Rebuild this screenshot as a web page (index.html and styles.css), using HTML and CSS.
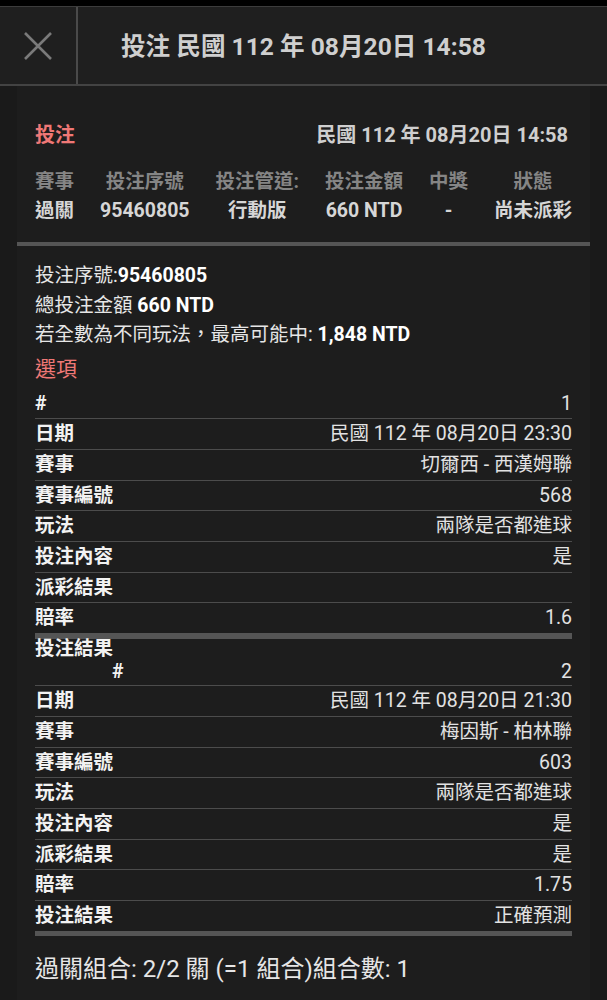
FILE: index.html
```html
<!DOCTYPE html>
<html lang="zh-Hant">
<head>
    <meta charset="UTF-8">
    <meta name="viewport" content="width=device-width, initial-scale=1.0">
    <title>投注</title>
    <link rel="stylesheet" href="styles.css">
</head>
<body>
    <div class="status-bar"></div>

    <!-- 上方標題列 -->
    <header class="top-bar">
        <button class="close-btn" aria-label="關閉">
            <svg width="28" height="28" viewBox="0 0 28 28">
                <path d="M1 1 L27 27 M27 1 L1 27" stroke="#7a7a7a" stroke-width="2.6" fill="none"/>
            </svg>
        </button>
        <div class="top-title">投注 民國 112 年 08月20日 14:58</div>
    </header>

    <div class="card">
        <!-- 投注摘要 -->
        <section class="summary">
            <div class="summary-head">
                <span class="red-title">投注</span>
                <span class="summary-date">民國 112 年 08月20日 14:58</span>
            </div>
            <div class="summary-table">
                <div class="col"><span class="col-label">賽事</span><span class="col-value">過關</span></div>
                <div class="col"><span class="col-label">投注序號</span><span class="col-value">95460805</span></div>
                <div class="col"><span class="col-label">投注管道:</span><span class="col-value">行動版</span></div>
                <div class="col"><span class="col-label">投注金額</span><span class="col-value">660 NTD</span></div>
                <div class="col"><span class="col-label">中獎</span><span class="col-value">-</span></div>
                <div class="col"><span class="col-label">狀態</span><span class="col-value">尚未派彩</span></div>
            </div>
        </section>

        <hr class="thick-line">

        <section class="detail">
            <p class="info">投注序號:<b>95460805</b></p>
            <p class="info">總投注金額 <b>660 NTD</b></p>
            <p class="info">若全數為不同玩法，最高可能中: <b>1,848 NTD</b></p>
            <h3 class="option-title">選項</h3>

            <!-- 第一關 -->
            <div class="row"><span class="label">#</span><span class="value">1</span></div>
            <div class="row"><span class="label">日期</span><span class="value">民國 112 年 08月20日 23:30</span></div>
            <div class="row"><span class="label">賽事</span><span class="value">切爾西 - 西漢姆聯</span></div>
            <div class="row"><span class="label">賽事編號</span><span class="value">568</span></div>
            <div class="row"><span class="label">玩法</span><span class="value">兩隊是否都進球</span></div>
            <div class="row"><span class="label">投注內容</span><span class="value">是</span></div>
            <div class="row"><span class="label">派彩結果</span><span class="value"></span></div>
            <div class="row row-end"><span class="label">賠率</span><span class="value">1.6</span></div>
            <div class="row-loose"><span class="label">投注結果</span></div>

            <!-- 第二關 -->
            <div class="row row-shift"><span class="label">#</span><span class="value">2</span></div>
            <div class="row"><span class="label">日期</span><span class="value">民國 112 年 08月20日 21:30</span></div>
            <div class="row"><span class="label">賽事</span><span class="value">梅因斯 - 柏林聯</span></div>
            <div class="row"><span class="label">賽事編號</span><span class="value">603</span></div>
            <div class="row"><span class="label">玩法</span><span class="value">兩隊是否都進球</span></div>
            <div class="row"><span class="label">投注內容</span><span class="value">是</span></div>
            <div class="row"><span class="label">派彩結果</span><span class="value">是</span></div>
            <div class="row"><span class="label">賠率</span><span class="value">1.75</span></div>
            <div class="row row-last"><span class="label">投注結果</span><span class="value">正確預測</span></div>

            <p class="combo">過關組合: 2/2 關 (=1 組合)組合數: 1</p>
        </section>
    </div>
</body>
</html>
```

FILE: styles.css
```css
/* 基本設定 */
body {
    margin: 0;
    background: #1a1a1a;
    color: #e6e6e6;
    font-family: Roboto, "Noto Sans CJK TC", sans-serif;
}

.status-bar {
    height: 6px;
    background: #000;
}

/* 上方標題列 */
.top-bar {
    display: flex;
    height: 77px;
    background: #1f1f1f;
    border-top: 1px solid #3c3c3c;
    border-bottom: 2px solid #434343;
}

.close-btn {
    width: 78px;
    border: none;
    border-right: 2px solid #4a4a4a;
    background: none;
    display: flex;
    align-items: center;
    justify-content: center;
    padding: 0;
}

.top-title {
    padding: 3px 0 0 43px;
    font-size: 24.6px;
    font-weight: 700;
    color: #cfcfcf;
    line-height: 74px;
}

/* 內容卡片 */
.card {
    margin: 0 17px;
    background: #1d1d1d;
    padding-top: 34px;
}

.summary {
    padding: 0 18px;
}

.summary-head {
    display: flex;
    justify-content: space-between;
    line-height: 30px;
    font-weight: 700;
}

.red-title {
    color: #ef7876;
    font-size: 20px;
}

.summary-date {
    color: #cfcfcf;
    font-size: 20px;
    padding-right: 4px;
}

.summary-table {
    display: flex;
    justify-content: space-between;
    margin-top: 17px;
    font-size: 19.5px;
    font-weight: 700;
    line-height: 29px;
}

.col {
    display: flex;
    flex-direction: column;
    align-items: center;
}

.col-label {
    color: #858585;
}

.col-value {
    color: #d6d6d6;
}

.thick-line {
    margin: 17px 0 0;
    border: none;
    height: 4px;
    background: #555;
}

/* 明細 */
.detail {
    padding: 15px 18px 40px;
}

.info {
    margin: 0;
    font-size: 19.5px;
    line-height: 29.5px;
    color: #e6e6e6;
}

.info b {
    color: #fff;
}

.option-title {
    margin: 3px 0 4px;
    font-size: 21px;
    font-weight: 400;
    line-height: 32px;
    color: #ef7876;
}

.row {
    display: flex;
    justify-content: space-between;
    font-size: 19.5px;
    line-height: 29.7px;
    border-bottom: 1px solid #4c4c4c;
}

.label {
    font-weight: 700;
    color: #f2f2f2;
}

.value {
    color: #e2e2e2;
}

.row-end {
    border-bottom: 6px solid #555;
}

.row-loose {
    font-size: 19.5px;
    line-height: 19px;
}

.row-shift {
    line-height: 27px;
    padding-left: 77px;
}

.row-last {
    border-bottom: 5px solid #555;
}

.combo {
    margin: 17px 0 0;
    font-size: 24px;
    line-height: 32px;
    color: #e6e6e6;
}
```
